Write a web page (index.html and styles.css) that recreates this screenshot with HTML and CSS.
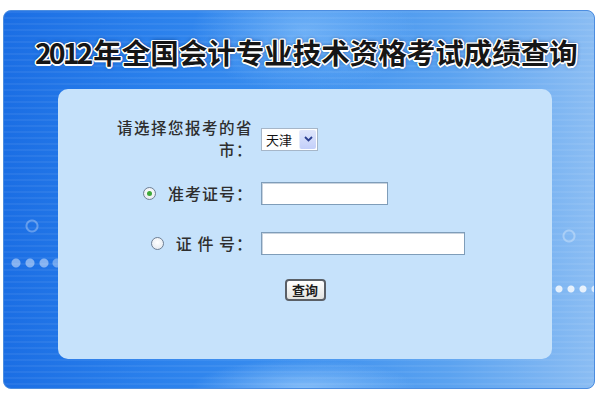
FILE: index.html
```html
<!DOCTYPE html>
<html lang="zh-CN">
<head>
<meta charset="utf-8">
<title>2012年全国会计专业技术资格考试成绩查询</title>
<link rel="stylesheet" href="styles.css">
</head>
<body>
<div class="frame">
  <h1 class="title"><span class="year">2012</span>年全国会计专业技术资格考试成绩查询</h1>
  <div class="panel">
    <div class="row row-province">
      <div class="label"><span class="line">请选择您报考的省</span><span class="line">市：</span></div>
      <div class="select">
        <span class="select-value">天津</span>
        <span class="select-arrow">
          <svg width="9" height="6" viewBox="0 0 9 6"><path d="M1 1 L4.5 4.5 L8 1" fill="none" stroke="#2b3f8f" stroke-width="1.8"/></svg>
        </span>
      </div>
    </div>
    <div class="row">
      <div class="label"><span class="radio checked"></span>准考证号：</div>
      <div class="input input-short"></div>
    </div>
    <div class="row">
      <div class="label"><span class="radio"></span>证 件 号：</div>
      <div class="input input-long"></div>
    </div>
    <div class="actions">
      <button class="btn" type="button">查询</button>
    </div>
  </div>
</div>
</body>
</html>
```
FILE: styles.css
```css
html, body {
  margin: 0;
  padding: 0;
  background: #ffffff;
}

body {
  width: 600px;
  height: 400px;
  overflow: hidden;
  font-family: "Noto Sans CJK SC", "Noto Sans", sans-serif;
}

.frame {
  box-sizing: border-box;
  width: 592px;
  height: 379px;
  margin: 10px 0 0 3px;
  border: 1px solid #4c8de0;
  border-radius: 8px;
  display: flex;
  flex-direction: column;
  background-color: #2f83ea;
  background-image:
    radial-gradient(circle at 12px 252px, rgba(255,255,255,.45) 0 4px, transparent 5px),
    radial-gradient(circle at 26px 252px, rgba(255,255,255,.45) 0 4px, transparent 5px),
    radial-gradient(circle at 40px 252px, rgba(255,255,255,.45) 0 4px, transparent 5px),
    radial-gradient(circle at 53px 252px, rgba(255,255,255,.35) 0 4px, transparent 5px),
    radial-gradient(circle at 555px 278px, rgba(255,255,255,.8) 0 3px, transparent 4px),
    radial-gradient(circle at 567px 278px, rgba(255,255,255,.8) 0 3px, transparent 4px),
    radial-gradient(circle at 579px 278px, rgba(255,255,255,.8) 0 3px, transparent 4px),
    radial-gradient(circle at 591px 278px, rgba(255,255,255,.7) 0 3px, transparent 4px),
    radial-gradient(circle at 28px 215px, transparent 0 4px, rgba(255,255,255,.3) 5px 6px, transparent 7px),
    radial-gradient(circle at 565px 225px, transparent 0 4px, rgba(255,255,255,.3) 5px 6px, transparent 7px),
    repeating-linear-gradient(180deg, rgba(255,255,255,.06) 0 2px, transparent 2px 6px),
    radial-gradient(ellipse 160px 90px at 300px 20px, rgba(170,215,255,.45), transparent 70%),
    radial-gradient(ellipse 150px 40px at 300px 378px, rgba(190,225,255,.55), transparent 75%),
    linear-gradient(90deg, #1b6ee4 0%, #2a80ec 25%, #3b8fef 50%, #5aa2f0 75%, #8bbdf3 100%);
}

.title {
  margin: 21px 0 0 31px;
  height: 40px;
  line-height: 40px;
  font-size: 28.5px;
  font-weight: 700;
  color: #161616;
  white-space: nowrap;
  text-shadow:
    1.5px 0 0 #fff, -1.5px 0 0 #fff, 0 1.5px 0 #fff, 0 -1.5px 0 #fff,
    1px 1px 0 #fff, -1px -1px 0 #fff, 1px -1px 0 #fff, -1px 1px 0 #fff,
    0 0 4px rgba(0, 30, 80, .8);
}

.year {
  letter-spacing: -3px;
  margin-right: 3px;
}

.panel {
  box-sizing: border-box;
  width: 494px;
  height: 270px;
  margin: 17px 0 0 54px;
  border-radius: 10px;
  background: #c6e2fb;
  padding: 28px 0 0 0;
  display: flex;
  flex-direction: column;
}

.row {
  display: flex;
  align-items: center;
  gap: 8px;
  height: 24px;
  margin-top: 26px;
}

.row-province {
  height: 38px;
  margin-top: 0;
}

.label {
  box-sizing: border-box;
  width: 195px;
  text-align: right;
  font-size: 16px;
  line-height: 20px;
  letter-spacing: 1px;
  color: #2e2e2e;
  font-weight: 500;
  display: flex;
  justify-content: flex-end;
  align-items: center;
}

.row-province .label {
  flex-direction: column;
  align-items: flex-end;
  font-size: 15.5px;
  letter-spacing: 1.5px;
  margin-top: 4px;
}

.line {
  display: block;
  height: 22.5px;
  line-height: 22.5px;
}

.radio {
  box-sizing: border-box;
  width: 13px;
  height: 13px;
  border-radius: 50%;
  border: 1px solid #6f7f93;
  background: radial-gradient(circle at 50% 40%, #ffffff, #dfe5ec);
  margin-right: 12px;
  display: inline-flex;
  align-items: center;
  justify-content: center;
}

.radio.checked::after {
  content: "";
  width: 5px;
  height: 5px;
  border-radius: 50%;
  background: #3fa83a;
}

.select {
  box-sizing: border-box;
  width: 57px;
  height: 23px;
  margin-top: 6px;
  border: 1px solid #a6b6c8;
  background: #fff;
  display: flex;
  align-items: center;
  padding: 1px;
}

.select-value {
  flex: 1;
  font-size: 13px;
  color: #111;
  padding-left: 3px;
  line-height: 19px;
}

.select-arrow {
  width: 16px;
  height: 19px;
  border-radius: 2px;
  background: linear-gradient(180deg, #dfe6fb, #c3cffa);
  border-left: 1px solid #e6ebfb;
  display: flex;
  align-items: center;
  justify-content: center;
}

.input {
  box-sizing: border-box;
  height: 23px;
  background: #fff;
  border: 1px solid #7f9db9;
  box-shadow: inset 1px 1px 0 #c9d3de;
}

.input-short {
  width: 127px;
}

.input-long {
  width: 204px;
}

.actions {
  display: flex;
  justify-content: center;
  margin-top: 24px;
}

.btn {
  box-sizing: border-box;
  width: 41px;
  height: 22px;
  padding: 0;
  border: 2px solid #5a5f66;
  border-radius: 4px;
  background: linear-gradient(180deg, #ffffff, #e3e3e0);
  font-family: "Noto Sans CJK SC", sans-serif;
  font-size: 13px;
  font-weight: 700;
  line-height: 16px;
  color: #1c1c1c;
}
```
